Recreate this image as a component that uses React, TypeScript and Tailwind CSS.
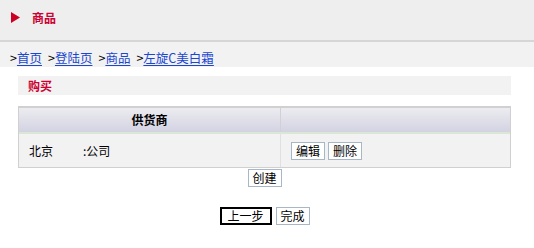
import React from "react";

const font = { fontFamily: '"Noto Sans CJK SC", "Liberation Sans", sans-serif' };

function Btn({ children, className = "" }: { children: React.ReactNode; className?: string }) {
  return (
    <button
      className={`h-[18px] bg-white border border-[#a7b7c7] text-[12px] leading-[14px] text-black ${className}`}
    >
      {children}
    </button>
  );
}

export default function App() {
  const crumbs = ["首页", "登陆页", "商品", "左旋C美白霜"];

  return (
    <div className="w-[534px] h-[248px] bg-white text-[12px] text-black overflow-hidden" style={font}>
      {/* Title bar */}
      <div className="h-[42px] bg-[#eeeeee] border-b-2 border-[#d6d6d6] flex items-start pt-[11px] pl-[11px]">
        <svg width="9" height="11" viewBox="0 0 9 11" className="mt-[1px]">
          <polygon points="0,0 9,5.5 0,11" fill="#cc0022" />
        </svg>
        <span className="ml-[12px] font-bold text-[#cc0033] leading-[13px]">商品</span>
      </div>

      {/* Breadcrumb */}
      <div className="h-[25px] bg-[#f2f2f2] flex items-end pl-[10px] pb-[2px] leading-[14px] text-[12.5px]">
        {crumbs.map((c, i) => (
          <span key={c} className={i > 0 ? "ml-[6px]" : ""}>
            &gt;<a href="#" className="text-[#1a46d0] underline underline-offset-2">{c}</a>
          </span>
        ))}
      </div>

      <div className="ml-[18px] w-[493px] mt-[9px]">
        {/* Section bar */}
        <div className="h-[19px] bg-[#f2f2f2] flex items-center pl-[10px]">
          <span className="font-bold text-[#cc0033] leading-[12px]">购买</span>
        </div>

        {/* Table */}
        <div className="mt-[11px] border-t-2 border-x border-b border-[#d0d0d0]">
          <div className="flex h-[26px] bg-gradient-to-b from-[#ececf0] to-[#d3d2e2] border-b-2 border-[#dae6d6]">
            <div className="w-[262px] border-r border-[#d0d0d6] flex items-center justify-center font-bold">
              供货商
            </div>
            <div className="flex-1" />
          </div>
          <div className="flex h-[33px] bg-[#f2f2f2]">
            <div className="w-[262px] border-r border-[#e0e0e0] flex items-center pl-[10px]">
              <span>北京</span>
              <span className="ml-[30px]">:公司</span>
            </div>
            <div className="flex-1 flex items-center pl-[10px] gap-[3px]">
              <Btn className="w-[34px]">编辑</Btn>
              <Btn className="w-[34px]">删除</Btn>
            </div>
          </div>
        </div>

        <div className="flex justify-center mt-[1px]">
          <Btn className="w-[34px]">创建</Btn>
        </div>

        <div className="flex justify-center gap-[4px] mt-[20px]">
          <Btn className="w-[52px] border-2 border-black">上一步</Btn>
          <Btn className="w-[34px]">完成</Btn>
        </div>
      </div>
    </div>
  );
}
